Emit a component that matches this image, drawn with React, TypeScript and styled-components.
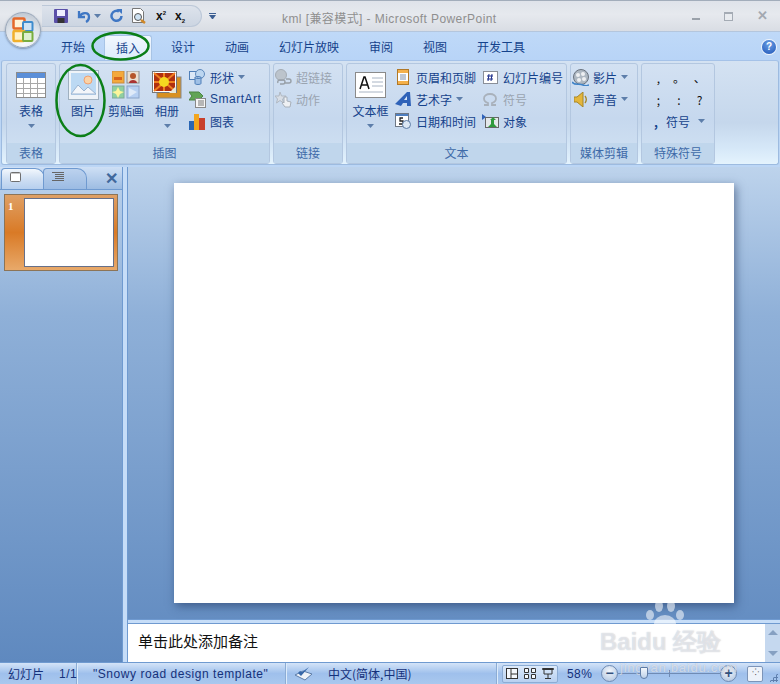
import styled, { createGlobalStyle } from "styled-components";

const GlobalStyle = createGlobalStyle`
  html, body { margin: 0; padding: 0; overflow: hidden; }
  body { font-family: "Noto Sans CJK SC", "Liberation Sans", sans-serif; }
`;

const Caret = () => (
  <svg width="7" height="4" viewBox="0 0 7 4"><path d="M0 0h7L3.5 4z" fill="#5d7eaa" /></svg>
);

const TableIcon = () => (
  <svg width="30" height="26" viewBox="0 0 30 26">
    <rect x=".5" y=".5" width="29" height="25" fill="#fff" stroke="#8c8c8c" />
    <rect x="1" y="1" width="28" height="5" fill="#5b8fd8" />
    {[7, 14, 21].map((x) => <path key={x} d={`M${x + .5} 6v19`} stroke="#a8a8a8" />)}
    {[11, 16, 21].map((y) => <path key={y} d={`M1 ${y + .5}h28`} stroke="#a8a8a8" />)}
  </svg>
);

const PictureIcon = () => (
  <svg width="31" height="30" viewBox="0 0 31 30">
    <rect x=".5" y=".5" width="30" height="29" fill="#eef3f8" stroke="#9fb0c0" />
    <rect x="3" y="3" width="25" height="22" fill="#bcd9f3" />
    <circle cx="20" cy="10" r="4" fill="#fbd3a6" stroke="#f0a070" />
    <path d="M3 24l7-9 6 6 4-4 8 7z" fill="#f3f6fa" stroke="#9cb4d0" />
  </svg>
);

const ClipIcon = () => (
  <svg width="28" height="28" viewBox="0 0 28 28">
    <rect x="0" y="0" width="12" height="12" fill="#f4a93c" stroke="#c98b3d" />
    <rect x="2" y="6" width="8" height="3" fill="#d8641c" />
    <rect x="15" y="0" width="12" height="12" fill="#eadfd0" stroke="#8c8c8c" />
    <circle cx="21" cy="5" r="3" fill="#b5552a" />
    <path d="M17 12c0-4 8-4 8 0z" fill="#a33" />
    <rect x="0" y="15" width="12" height="12" fill="#8fd0a0" stroke="#7fa89a" />
    <path d="M6 16l2 4 4 1-4 2-2 4-2-4-4-2 4-1z" fill="#fdf59a" />
    <rect x="15" y="15" width="12" height="12" fill="#b7d0f2" stroke="#8aa4c8" />
    <path d="M17 17l8 4-8 5z" fill="#dfeaf8" />
  </svg>
);

const AlbumIcon = () => (
  <svg width="30" height="28" viewBox="0 0 30 28">
    <rect x="5" y="6" width="24" height="21" fill="#d89020" stroke="#888" />
    <rect x=".5" y=".5" width="24" height="21" fill="#fff" stroke="#777" />
    <rect x="2" y="2" width="21" height="18" fill="#b03010" />
    <path d="M2 2l21 18M23 2L2 20M12 2v18M2 11h21" stroke="#f08020" strokeWidth="2" />
    <circle cx="12" cy="11" r="5" fill="#f5d820" />
    <path d="M24 15l-7 7h7z" fill="#e8e8d8" />
  </svg>
);

const ShapesIcon = () => (
  <svg width="17" height="16" viewBox="0 0 17 16">
    <rect x=".5" y="2.5" width="9" height="8" fill="#dbe8f7" stroke="#4f7fb8" />
    <circle cx="11" cy="5" r="4.5" fill="#bcd6f0" stroke="#5f8abc" />
    <path d="M6 8.5v6c0 1.3 6 1.3 6 0v-6c0 1.3-6 1.3-6 0zM6 8.5c0-1.3 6-1.3 6 0" fill="#9fc0e6" stroke="#4f7fb8" />
  </svg>
);

const SmartArtIcon = () => (
  <svg width="17" height="17" viewBox="0 0 17 17">
    <path d="M0 1h10l4 4-4 4H0l3-4z" fill="#61a456" stroke="#4c8444" />
    <rect x="6.5" y="7.5" width="10" height="9" fill="#f6f6f6" stroke="#888" />
    <path d="M9 10h6M9 12h6M9 14h6" stroke="#777" />
  </svg>
);

const ChartIcon = () => (
  <svg width="16" height="17" viewBox="0 0 16 17">
    <rect x="0" y="8" width="5" height="9" fill="#2a66b4" />
    <rect x="5" y="1" width="5" height="16" fill="#f2a51e" />
    <rect x="10" y="5" width="6" height="12" fill="#c8402c" />
  </svg>
);

const LinkIcon = () => (
  <svg width="18" height="17" viewBox="0 0 18 17">
    <circle cx="7" cy="6" r="5.5" fill="#bcc4cc" stroke="#a4acb4" />
    <path d="M4 14a2 2 0 0 1 2-3h3a2 2 0 0 1 0 4H6M10 14h5a2 2 0 0 0 0-4h-3" fill="none" stroke="#98a0a8" strokeWidth="1.4" />
  </svg>
);

const ActionIcon = () => (
  <svg width="17" height="17" viewBox="0 0 17 17">
    <path d="M5 1l1.5 4H11L7.5 8l1 4-3.5-2.5L1.500 12l1-4L0 5h4z" fill="#d8dee6" stroke="#b0b8c2" />
    <path d="M9 6v6l-1-1-1 1 3 4h5l1-5-4-1V6z" fill="#eef0f3" stroke="#a8b0ba" />
  </svg>
);

const TextBoxIcon = () => (
  <svg width="31" height="26" viewBox="0 0 31 26">
    <rect x=".5" y=".5" width="30" height="25" fill="#fff" stroke="#8a8a8a" />
    <path d="M5 17l4-12h1l4 12M6.500 13h6" fill="none" stroke="#111" strokeWidth="1.500" />
    <path d="M17 6h11M17 10h11M17 14h11M4 20h24" stroke="#a8b4c4" />
  </svg>
);

const HeaderIcon = () => (
  <svg width="12" height="16" viewBox="0 0 12 16">
    <rect x=".5" y=".5" width="11" height="15" fill="#fff" stroke="#b07828" />
    <rect x="1" y="1" width="10" height="3" fill="#f4b04a" />
    <rect x="1" y="12" width="10" height="3" fill="#f4b04a" />
    <path d="M3 6h6M3 8h6M3 10h6" stroke="#8090a8" />
  </svg>
);

const NumberIcon = () => (
  <svg width="15" height="13" viewBox="0 0 15 13">
    <rect x=".5" y=".5" width="14" height="12" fill="#fff" stroke="#8a8f98" />
    <path d="M6 3L5 10M9 3L8 10M4 5h6M4 8h6" stroke="#1c2f8c" />
  </svg>
);

const WordArtIcon = () => (
  <svg width="17" height="16" viewBox="0 0 17 16">
    <path d="M0 13L12 1h3l1 14h-4v-3H8l-2 3z" fill="#2f62b8" />
    <path d="M12 5v4H9z" fill="#d8e6f8" />
  </svg>
);

const OmegaIcon = () => (
  <svg width="14" height="13" viewBox="0 0 14 13">
    <path d="M1 12h4v-2C2 9 1 7 1 5.500 1 3 3.500 1 7 1s6 2 6 4.500c0 1.500-1 3.500-4 4.500v2h4" fill="none" stroke="#a9b1bb" strokeWidth="1.800" />
  </svg>
);

const DateIcon = () => (
  <svg width="16" height="16" viewBox="0 0 16 16">
    <rect x=".5" y=".5" width="13" height="13" fill="#fff" stroke="#6f7885" />
    <rect x="1" y="1" width="12" height="2" fill="#4f7fc0" />
    <path d="M8 5H5v3h3v3H4" fill="none" stroke="#222" strokeWidth="1.300" />
    <circle cx="11.500" cy="11.500" r="4" fill="#dbe7f4" stroke="#5a7ba6" />
  </svg>
);

const ObjectIcon = () => (
  <svg width="17" height="14" viewBox="0 0 17 14">
    <path d="M0 0l4 3-4 3z" fill="#2f62b8" />
    <rect x="3.500" y="3.500" width="13" height="10" fill="#e4e8ea" stroke="#666" />
    <path d="M8 6l3-3 3 3h-2v4l3 3H6l3-3V6z" fill="#2f9a3c" />
  </svg>
);

const MovieIcon = () => (
  <svg width="17" height="17" viewBox="0 0 17 17">
    <circle cx="9" cy="8" r="7.500" fill="#aeb8c2" stroke="#69727e" />
    <circle cx="6" cy="6" r="2" fill="#eef0f2" />
    <circle cx="11" cy="5" r="2" fill="#eef0f2" />
    <circle cx="12" cy="10" r="2" fill="#eef0f2" />
    <circle cx="7" cy="11" r="2" fill="#eef0f2" />
    <path d="M0 13c3 4 7 1 11 3s4 0 6 0" fill="none" stroke="#3f83c8" strokeWidth="1.500" />
  </svg>
);

const SoundIcon = () => (
  <svg width="13" height="15" viewBox="0 0 13 15">
    <path d="M0 5h3l6-5v15l-6-5H0z" fill="#e4b63c" stroke="#a58628" />
    <path d="M11 4c1.500 2 1.500 5 0 7" fill="none" stroke="#a58628" strokeWidth="1.300" />
  </svg>
);

const CheckBookIcon = () => (
  <svg width="18" height="15" viewBox="0 0 18 15">
    <path d="M0 9l8-4 9 3-7 6z" fill="#eef2f8" stroke="#5c7ca8" />
    <path d="M3 7l3 3 8-9-7 5-2-1z" fill="#3767a8" />
  </svg>
);

const LogoIcon = () => (
  <svg width="22" height="26" viewBox="0 0 22 26">
    <rect x="1.500" y="1.500" width="11" height="10" rx="1" fill="#fff3d8" stroke="#e5682a" strokeWidth="2.500" />
    <rect x="11" y="5" width="9.500" height="9" rx="1" fill="#cfe3f4" stroke="#3f8ccd" strokeWidth="2" />
    <rect x="1.500" y="14" width="11" height="10" rx="1" fill="#fff2c8" stroke="#f1b02c" strokeWidth="2.500" />
    <rect x="11" y="15" width="9.500" height="9" rx="1" fill="#def0cf" stroke="#79ad3f" strokeWidth="2" />
  </svg>
);

const QSave = () => (
  <svg width="14" height="14" viewBox="0 0 14 14">
    <rect width="14" height="14" rx="1" fill="#5a4fa8" />
    <rect x="3" y="1" width="8" height="6" fill="#eef" />
    <rect x="3.500" y="9" width="7" height="5" fill="#333" />
  </svg>
);

const QUndo = () => (
  <svg width="14" height="13" viewBox="0 0 14 13">
    <path d="M2 1v6h6M2.500 6.500C5 2 12 2 12 7c0 2-1 4-3 5" fill="none" stroke="#3f77c4" strokeWidth="2.300" />
  </svg>
);

const QRedo = () => (
  <svg width="13" height="14" viewBox="0 0 13 14">
    <path d="M9 2.500A5 5 0 1 0 11.500 7" fill="none" stroke="#3f77c4" strokeWidth="2.500" />
    <path d="M6.500 0h5.500v5z" fill="#3f77c4" />
  </svg>
);

const QPreview = () => (
  <svg width="15" height="16" viewBox="0 0 15 16">
    <path d="M.5.500h8l3 3v11H.5z" fill="#fff" stroke="#777" />
    <circle cx="6" cy="9" r="3.500" fill="#cfe3f4" stroke="#555" />
    <path d="M9 12l4 3" stroke="#d08828" strokeWidth="2.500" />
  </svg>
);

const SlidePageIcon = () => (
  <svg width="11" height="10" viewBox="0 0 11 10">
    <rect x=".5" y=".5" width="10" height="9" rx="1" fill="#fff" stroke="#6f6f6f" />
    <path d="M1 1.500h9" stroke="#c7c7c7" />
  </svg>
);

const OutlineIcon = () => (
  <svg width="12" height="9" viewBox="0 0 12 9">
    <path d="M0 .5h12M3 2.500h9M3 4.500h9M3 6.500h9M0 8.500h12" stroke="#666" />
  </svg>
);

const Page = styled.div`
  position: relative;
  width: 780px;
  height: 684px;
  display: flex;
  flex-direction: column;
  overflow: hidden;
  background: #bcd6f5;
`;

const TitleBar = styled.div`
  height: 32px;
  flex: none;
  display: flex;
  align-items: center;
  box-sizing: border-box;
  border-top: 1px solid #a2adbb;
  border-bottom: 1px solid #b4c6dd;
  background: linear-gradient(#dfe3ea, #e6e9ee 45%, #d9dde4);
`;

const QuickBar = styled.div`
  margin-left: 42px;
  width: 160px;
  height: 22px;
  box-sizing: border-box;
  padding-left: 12px;
  display: flex;
  align-items: center;
  gap: 9px;
  border: 1px solid #bcc8d8;
  border-left: none;
  border-radius: 0 11px 11px 0;
  background: linear-gradient(#dde3ec, #ccd5e2);
`;

const QuickGlyph = styled.span`
  font: bold 12px "Liberation Sans", sans-serif;
  color: #111;
  line-height: 14px;
  sup, sub { font-size: 6px; line-height: 0; }
`;

const TinyCaret = styled.span`
  margin-left: -6px;
  display: flex;
`;

const QuickMenu = styled.span`
  margin-left: 7px;
  width: 7px;
  display: flex;
  flex-direction: column;
  gap: 1px;
  &::before { content: ""; height: 1px; background: #3c5f92; }
  &::after { content: ""; height: 0; border: 3px solid transparent; border-bottom: none; border-top: 4px solid #3c5f92; }
`;

const Title = styled.div`
  position: absolute;
  left: 282px;
  top: 9px;
  font: 12px "Liberation Sans", "Noto Sans CJK SC", sans-serif;
  letter-spacing: 0.42px;
  color: #8f8f8f;
  white-space: nowrap;
`;

const WindowButtons = styled.div`
  margin-left: auto;
  padding-right: 12px;
  display: flex;
  align-items: center;
  gap: 24px;
`;

const Minimize = styled.span`
  width: 8px;
  height: 2px;
  margin-top: 5px;
  background: #9aa1aa;
`;

const Maximize = styled.span`
  width: 7px;
  height: 6px;
  border: 1px solid #a4abb4;
  border-top-width: 2px;
  background: #e8ebef;
`;

const CloseMark = styled.span`
  font: bold 13px/14px "Liberation Sans", sans-serif;
  color: #a3a9b1;
`;

const OfficeButton = styled.div`
  position: absolute;
  left: 5px;
  top: 12px;
  width: 36px;
  height: 36px;
  box-sizing: border-box;
  border-radius: 50%;
  display: flex;
  align-items: center;
  justify-content: center;
  border: 1px solid #9aa8ba;
  background: radial-gradient(circle at 50% 85%, #f9fbfd, #dde3ea 55%, #b4bdc8);
  box-shadow: 0 1px 2px rgba(60, 80, 110, 0.5);
`;

const TabRow = styled.div`
  height: 28px;
  flex: none;
  box-sizing: border-box;
  padding-left: 46px;
  display: flex;
  align-items: flex-end;
  background: linear-gradient(#bfd9f8, #b8d4f7);
`;

const Tab = styled.div<{ $active?: boolean }>`
  height: 25px;
  margin: 0 ${(p) => (p.$active ? "4px" : "0")};
  padding: 0 ${(p) => (p.$active ? "11px" : "15px")};
  box-sizing: border-box;
  line-height: 24px;
  font-size: 12px;
  color: #15428b;
  white-space: nowrap;
  border-radius: 3px 3px 0 0;
  ${(p) =>
    p.$active &&
    `
    border: 1px solid #a8c4e6;
    border-bottom: none;
    margin-bottom: -1px;
    height: 26px;
    background: linear-gradient(#f1f7fe, #dcebfb);
  `}
`;

const HelpBadge = styled.div`
  position: absolute;
  left: 762px;
  top: 40px;
  width: 14px;
  height: 14px;
  border-radius: 50%;
  text-align: center;
  font: bold 10px/14px "Liberation Sans", sans-serif;
  color: #fff;
  background: radial-gradient(circle at 50% 30%, #6b9fe4, #1f55b8);
  box-shadow: 0 0 0 1px #eef4fb;
`;

const Ribbon = styled.div`
  height: 105px;
  flex: none;
  box-sizing: border-box;
  margin: 0 1px;
  padding: 2px 0 0 4px;
  display: flex;
  gap: 3px;
  border: 1px solid #9dbbe0;
  border-top-color: #a5c2e8;
  border-radius: 3px;
  background: linear-gradient(#d4e2f2, #c5d7ec 60%, #d6e8f8 85%, #e4f3fd);
`;

const Group = styled.div<{ $w: number }>`
  width: ${(p) => p.$w}px;
  height: 101px;
  flex: none;
  box-sizing: border-box;
  display: flex;
  flex-direction: column;
  border: 1px solid #b3c7e0;
  border-radius: 3px;
  background: linear-gradient(#d3e1f2, #c6d8ee 55%, #d1e2f3);
`;

const GroupBody = styled.div`
  flex: 1;
  display: flex;
  min-height: 0;
`;

const GroupLabel = styled.div`
  height: 20px;
  flex: none;
  text-align: center;
  font-size: 12px;
  line-height: 19px;
  color: #3e6aa8;
  background: #c0d6ec;
`;

const BigButton = styled.div<{ $w: number }>`
  width: ${(p) => p.$w}px;
  flex: none;
  padding-top: 6px;
  display: flex;
  flex-direction: column;
  align-items: center;
  font-size: 12px;
  line-height: 16px;
  color: #15428b;
  white-space: nowrap;
`;

const BigIconSlot = styled.div`
  height: 30px;
  display: flex;
  align-items: center;
  margin-bottom: 3px;
`;

const BigCaret = styled.div`
  margin-top: 5px;
  display: flex;
`;

const SmallColumn = styled.div<{ $w?: number }>`
  ${(p) => (p.$w ? `width: ${p.$w}px; flex: none;` : "")}
  padding-top: 2px;
  display: flex;
  flex-direction: column;
  gap: 0;
`;

const SmallButton = styled.div<{ $off?: boolean }>`
  height: 22px;
  display: flex;
  align-items: center;
  gap: 4px;
  font-size: 12px;
  color: ${(p) => (p.$off ? "#9aa4b0" : "#15428b")};
  white-space: nowrap;
`;

const IconSlot = styled.span`
  width: 18px;
  flex: none;
  display: flex;
  justify-content: center;
`;

const LatinLabel = styled.span`
  font-family: "Liberation Sans", sans-serif;
  letter-spacing: 0.5px;
`;

const SymbolGrid = styled.div`
  width: 62px;
  margin: 2px 0 0 6px;
  display: grid;
  grid-template-columns: repeat(3, 1fr);
  grid-auto-rows: 22px;
  align-items: center;
  justify-items: center;
  font: 12px "Noto Sans CJK SC", sans-serif;
  color: #111;
`;

const SymbolRow = styled(SmallButton)`
  grid-column: 1 / -1;
  justify-self: start;
  padding-left: 6px;
  gap: 8px;
`;

const Workspace = styled.div`
  flex: 1;
  min-height: 0;
  display: flex;
  margin-top: 2px;
  background: linear-gradient(#bdd3ec, #8fb0d8 30%, #5f89bf 100%);
`;

const SidePanel = styled.div`
  width: 122px;
  flex: none;
  display: flex;
  flex-direction: column;
`;

const PanelTabs = styled.div`
  height: 23px;
  flex: none;
  box-sizing: border-box;
  padding: 0 0 0 1px;
  display: flex;
  align-items: flex-end;
  border-bottom: 1px solid #6f9ad0;
  background: linear-gradient(#cfe0f5, #9dbce2);
`;

const PanelTab = styled.div<{ $active?: boolean }>`
  width: ${(p) => (p.$active ? 44 : 44)}px;
  margin-right: ${(p) => (p.$active ? -2 : 0)}px;
  height: 21px;
  flex: none;
  box-sizing: border-box;
  padding: 3px 0 0 ${(p) => (p.$active ? 8 : 8)}px;
  display: flex;
  align-items: flex-start;
  border: 1px solid #6f9ad0;
  border-bottom: none;
  border-radius: 4px 10px 0 0;
  transform-origin: bottom;
  background: ${(p) =>
    p.$active
      ? "linear-gradient(#f2f7fd, #cfdff3 50%, #b6cfee)"
      : "linear-gradient(#bcd2ee, #9bbbe3)"};
`;

const PanelClose = styled.div`
  margin-left: auto;
  margin-right: 4px;
  font: bold 16px/20px "Liberation Sans", sans-serif;
  color: #41689c;
`;

const ThumbItem = styled.div`
  margin: 4px 4px 0 4px;
  height: 77px;
  flex: none;
  box-sizing: border-box;
  padding: 3px 3px 3px 19px;
  position: relative;
  border: 1px solid #8c7457;
  background: linear-gradient(#dfa065, #d97a26 50%, #e8a96a);
`;

const ThumbNumber = styled.span`
  position: absolute;
  left: 3px;
  top: 5px;
  font: bold 11px "Liberation Serif", serif;
  color: #fff;
`;

const ThumbSlide = styled.div`
  height: 100%;
  background: #fff;
  border: 1px solid #66708a;
  box-sizing: border-box;
`;

const Splitter = styled.div`
  width: 6px;
  flex: none;
  box-sizing: border-box;
  border-left: 1px solid #6f9ad0;
  border-right: 1px solid #6f9ad0;
  background: #c6ddf8;
`;

const MainColumn = styled.div`
  flex: 1;
  min-width: 0;
  display: flex;
  flex-direction: column;
`;

const Stage = styled.div`
  flex: 1;
  min-height: 0;
  padding: 16px 0 0 46px;
`;

const Slide = styled.div`
  width: 560px;
  height: 420px;
  background: #fff;
  box-shadow: 2px 3px 9px rgba(30, 50, 90, 0.55);
`;

const NotesSplit = styled.div`
  height: 5px;
  flex: none;
  box-sizing: border-box;
  border-top: 1px solid #6f9ad0;
  border-bottom: 1px solid #6f9ad0;
  background: #c6ddf8;
`;

const Notes = styled.div`
  height: 38px;
  flex: none;
  display: flex;
  background: #fff;
`;

const NotesText = styled.div`
  flex: 1;
  padding: 6px 0 0 10px;
  font-size: 15px;
  line-height: 22px;
  color: #111;
`;

const NotesScroll = styled.div`
  width: 15px;
  flex: none;
  display: flex;
  flex-direction: column;
  justify-content: space-between;
  align-items: center;
  padding: 6px 0;
  box-sizing: border-box;
  background: #c5d8ef;
`;

const ScrollArrow = styled.span<{ $down?: boolean }>`
  width: 0;
  height: 0;
  border: 5px solid transparent;
  ${(p) => (p.$down ? "border-top: 5px solid #86a0c2; border-bottom: none;" : "border-bottom: 5px solid #86a0c2; border-top: none;")}
`;

const StatusBar = styled.div`
  height: 22px;
  flex: none;
  box-sizing: border-box;
  display: flex;
  align-items: center;
  border-top: 1px solid #6f9ad0;
  font-size: 12px;
  color: #15317a;
  white-space: nowrap;
  background: linear-gradient(#d4e4f8, #9fc0ec 50%, #a9c8ee);
`;

const StatusCell = styled.div<{ $w: number; $left?: number }>`
  width: ${(p) => p.$w}px;
  height: 100%;
  flex: none;
  box-sizing: border-box;
  padding-left: ${(p) => p.$left ?? 8}px;
  display: flex;
  align-items: center;
  gap: 15px;
  border-right: 1px solid #8cacd4;
  box-shadow: 1px 0 0 #dcebfb;
`;

const LatinStatus = styled.span`
  font-family: "Liberation Sans", sans-serif;
  letter-spacing: 0.55px;
`;

const ViewButtons = styled.div`
  margin-left: 5px;
  height: 18px;
  width: 56px;
  flex: none;
  box-sizing: border-box;
  display: grid;
  grid-template-columns: repeat(3, 1fr);
  justify-items: center;
  align-items: center;
  border: 1px solid #8cacd4;
  border-radius: 2px;
  background: linear-gradient(#dceafb, #b8d0f0);
`;

const Percent = styled.span`
  margin-left: 9px;
  width: 34px;
  flex: none;
  font-family: "Liberation Sans", sans-serif;
  letter-spacing: 0.4px;
`;

const ZoomRound = styled.span`
  width: 15px;
  height: 15px;
  flex: none;
  border-radius: 50%;
  text-align: center;
  font: bold 14px/14px "Liberation Sans", sans-serif;
  color: #33507c;
  border: 1px solid #6f8bb4;
  background: radial-gradient(circle at 50% 35%, #f4f8fd, #a9bfdc);
`;

const ZoomTrack = styled.div`
  position: relative;
  width: 102px;
  height: 1px;
  flex: none;
  background: #6f8bb4;
  &::after {
    content: "";
    position: absolute;
    left: 51px;
    top: -3px;
    width: 1px;
    height: 7px;
    background: #6f8bb4;
  }
`;

const ZoomThumb = styled.span`
  position: absolute;
  left: 22px;
  top: -6px;
  width: 8px;
  height: 12px;
  box-sizing: border-box;
  border: 1px solid #5f7ca6;
  border-radius: 1px 1px 4px 4px;
  background: linear-gradient(#f3f7fc, #bed1e9);
  z-index: 1;
`;

const FitButton = styled.div`
  margin-left: 10px;
  width: 14px;
  height: 14px;
  flex: none;
  border: 1px solid #7c94b8;
  border-radius: 2px;
  background: #eef3fa;
  text-align: center;
  font: 9px/13px "Liberation Mono", monospace;
  color: #333;
`;

const Grip = styled.div`
  margin-left: auto;
  margin-right: 2px;
  align-self: flex-end;
  margin-bottom: 2px;
  width: 9px;
  height: 9px;
  background: radial-gradient(circle, #5e7fae 1px, transparent 1.2px) 0 0 / 3px 3px;
  clip-path: polygon(100% 0, 100% 100%, 0 100%);
`;

const Annotation = styled.svg`
  position: absolute;
  left: 0;
  top: 0;
  pointer-events: none;
`;

const Watermark = styled.div`
  position: absolute;
  left: 600px;
  top: 600px;
  width: 170px;
  color: rgba(255, 255, 255, 0.55);
  font-family: "Liberation Sans", sans-serif;
  text-shadow: 0 0 1px rgba(120, 130, 150, 0.5);
  pointer-events: none;
`;

const Paw = styled.svg`
  position: absolute;
  left: 44px;
  top: 0;
`;

const WatermarkLine = styled.div`
  position: absolute;
  left: 0;
  top: 29px;
  white-space: nowrap;
  font-size: 24px;
  font-weight: bold;
  line-height: 26px;
`;

const WatermarkSite = styled.div`
  position: absolute;
  left: 20px;
  top: 60px;
  font-size: 13px;
  letter-spacing: 0.75px;
  white-space: nowrap;
`;

const App = () => {
  return (
    <Page>
      <GlobalStyle />
      <TitleBar>
        <QuickBar>
          <QSave />
          <QUndo />
          <TinyCaret><Caret /></TinyCaret>
          <QRedo />
          <QPreview />
          <QuickGlyph>x<sup>2</sup></QuickGlyph>
          <QuickGlyph>x<sub>2</sub></QuickGlyph>
        </QuickBar>
        <QuickMenu />
        <WindowButtons>
          <Minimize />
          <Maximize />
          <CloseMark>✕</CloseMark>
        </WindowButtons>
      </TitleBar>
      <Title>kml [兼容模式] - Microsoft PowerPoint</Title>
      <TabRow>
        <Tab>开始</Tab>
        <Tab $active>插入</Tab>
        <Tab>设计</Tab>
        <Tab>动画</Tab>
        <Tab>幻灯片放映</Tab>
        <Tab>审阅</Tab>
        <Tab>视图</Tab>
        <Tab>开发工具</Tab>
      </TabRow>
      <Ribbon>
        <Group $w={50}>
          <GroupBody>
            <BigButton $w={48}>
              <BigIconSlot><TableIcon /></BigIconSlot>
              表格
              <BigCaret><Caret /></BigCaret>
            </BigButton>
          </GroupBody>
          <GroupLabel>表格</GroupLabel>
        </Group>
        <Group $w={211}>
          <GroupBody>
            <BigButton $w={46}>
              <BigIconSlot><PictureIcon /></BigIconSlot>
              图片
            </BigButton>
            <BigButton $w={40}>
              <BigIconSlot><ClipIcon /></BigIconSlot>
              剪贴画
            </BigButton>
            <BigButton $w={42}>
              <BigIconSlot><AlbumIcon /></BigIconSlot>
              相册
              <BigCaret><Caret /></BigCaret>
            </BigButton>
            <SmallColumn>
              <SmallButton><IconSlot><ShapesIcon /></IconSlot>形状 <Caret /></SmallButton>
              <SmallButton><IconSlot><SmartArtIcon /></IconSlot><LatinLabel>SmartArt</LatinLabel></SmallButton>
              <SmallButton><IconSlot><ChartIcon /></IconSlot>图表</SmallButton>
            </SmallColumn>
          </GroupBody>
          <GroupLabel>插图</GroupLabel>
        </Group>
        <Group $w={70}>
          <GroupBody>
            <SmallColumn>
              <SmallButton $off><IconSlot><LinkIcon /></IconSlot>超链接</SmallButton>
              <SmallButton $off><IconSlot><ActionIcon /></IconSlot>动作</SmallButton>
            </SmallColumn>
          </GroupBody>
          <GroupLabel>链接</GroupLabel>
        </Group>
        <Group $w={221}>
          <GroupBody>
            <BigButton $w={47}>
              <BigIconSlot><TextBoxIcon /></BigIconSlot>
              文本框
              <BigCaret><Caret /></BigCaret>
            </BigButton>
            <SmallColumn $w={87}>
              <SmallButton><IconSlot><HeaderIcon /></IconSlot>页眉和页脚</SmallButton>
              <SmallButton><IconSlot><WordArtIcon /></IconSlot>艺术字 <Caret /></SmallButton>
              <SmallButton><IconSlot><DateIcon /></IconSlot>日期和时间</SmallButton>
            </SmallColumn>
            <SmallColumn>
              <SmallButton><IconSlot><NumberIcon /></IconSlot>幻灯片编号</SmallButton>
              <SmallButton $off><IconSlot><OmegaIcon /></IconSlot>符号</SmallButton>
              <SmallButton><IconSlot><ObjectIcon /></IconSlot>对象</SmallButton>
            </SmallColumn>
          </GroupBody>
          <GroupLabel>文本</GroupLabel>
        </Group>
        <Group $w={68}>
          <GroupBody>
            <SmallColumn>
              <SmallButton><IconSlot><MovieIcon /></IconSlot>影片 <Caret /></SmallButton>
              <SmallButton><IconSlot><SoundIcon /></IconSlot>声音 <Caret /></SmallButton>
            </SmallColumn>
          </GroupBody>
          <GroupLabel>媒体剪辑</GroupLabel>
        </Group>
        <Group $w={74}>
          <GroupBody>
            <SymbolGrid>
              <span>,</span><span>。</span><span>、</span>
              <span>;</span><span>:</span><span>?</span>
              <SymbolRow><b>,</b>符号 <Caret /></SymbolRow>
            </SymbolGrid>
          </GroupBody>
          <GroupLabel>特殊符号</GroupLabel>
        </Group>
      </Ribbon>
      <Workspace>
        <SidePanel>
          <PanelTabs>
            <PanelTab $active><SlidePageIcon /></PanelTab>
            <PanelTab><OutlineIcon /></PanelTab>
            <PanelClose>✕</PanelClose>
          </PanelTabs>
          <ThumbItem>
            <ThumbNumber>1</ThumbNumber>
            <ThumbSlide />
          </ThumbItem>
        </SidePanel>
        <Splitter />
        <MainColumn>
          <Stage><Slide /></Stage>
          <NotesSplit />
          <Notes>
            <NotesText>单击此处添加备注</NotesText>
            <NotesScroll>
              <ScrollArrow />
              <ScrollArrow $down />
            </NotesScroll>
          </Notes>
        </MainColumn>
      </Workspace>
      <StatusBar>
        <StatusCell $w={77}>幻灯片 <LatinStatus>1/1</LatinStatus></StatusCell>
        <StatusCell $w={209} $left={16}><LatinStatus>"Snowy road design template"</LatinStatus></StatusCell>
        <StatusCell $w={211} $left={9}><CheckBookIcon />中文(简体,中国)</StatusCell>
        <ViewButtons>
          <svg width="12" height="11" viewBox="0 0 12 11"><rect x=".5" y=".5" width="11" height="10" fill="#f4f8fd" stroke="#333" /><path d="M5 1v9M5 6h6" stroke="#333" /></svg>
          <svg width="12" height="11" viewBox="0 0 12 11"><path d="M.5.500h4v4h-4zM7.500.500h4v4h-4zM.5 6.500h4v4h-4zM7.500 6.500h4v4h-4z" fill="#f4f8fd" stroke="#333" /></svg>
          <svg width="12" height="11" viewBox="0 0 12 11"><path d="M.5.500h11v1h-11zM2 2v4h8V2M6 6v4M3 10.500h6" fill="none" stroke="#333" /></svg>
        </ViewButtons>
        <Percent>58%</Percent>
        <ZoomRound>−</ZoomRound>
        <ZoomTrack><ZoomThumb /></ZoomTrack>
        <ZoomRound>+</ZoomRound>
        <FitButton>⁘</FitButton>
        <Grip />
      </StatusBar>
      <OfficeButton><LogoIcon /></OfficeButton>
      <HelpBadge>?</HelpBadge>
      <Annotation width="780" height="684" viewBox="0 0 780 684">
        <ellipse cx="120.500" cy="46" rx="28" ry="13.500" fill="none" stroke="#0b7f18" strokeWidth="2.500" />
        <ellipse cx="80.500" cy="100.500" rx="24" ry="35.500" fill="none" stroke="#0b7f18" strokeWidth="2.500" />
      </Annotation>
      <HelpSpacer />
      <Watermark>
        <Paw width="42" height="34" viewBox="0 0 42 34">
          <ellipse cx="21" cy="24" rx="11" ry="9" fill="currentColor" />
          <ellipse cx="6" cy="15" rx="4" ry="5" fill="currentColor" />
          <ellipse cx="15" cy="6" rx="4" ry="6" fill="currentColor" />
          <ellipse cx="27" cy="6" rx="4" ry="6" fill="currentColor" />
          <ellipse cx="36" cy="15" rx="4" ry="5" fill="currentColor" />
        </Paw>
        <WatermarkLine>Bai<span>du</span> 经验</WatermarkLine>
        <WatermarkSite>jingyan.baidu.com</WatermarkSite>
      </Watermark>
    </Page>
  );
};

const HelpSpacer = styled.span`
  display: none;
`;

export default App;
